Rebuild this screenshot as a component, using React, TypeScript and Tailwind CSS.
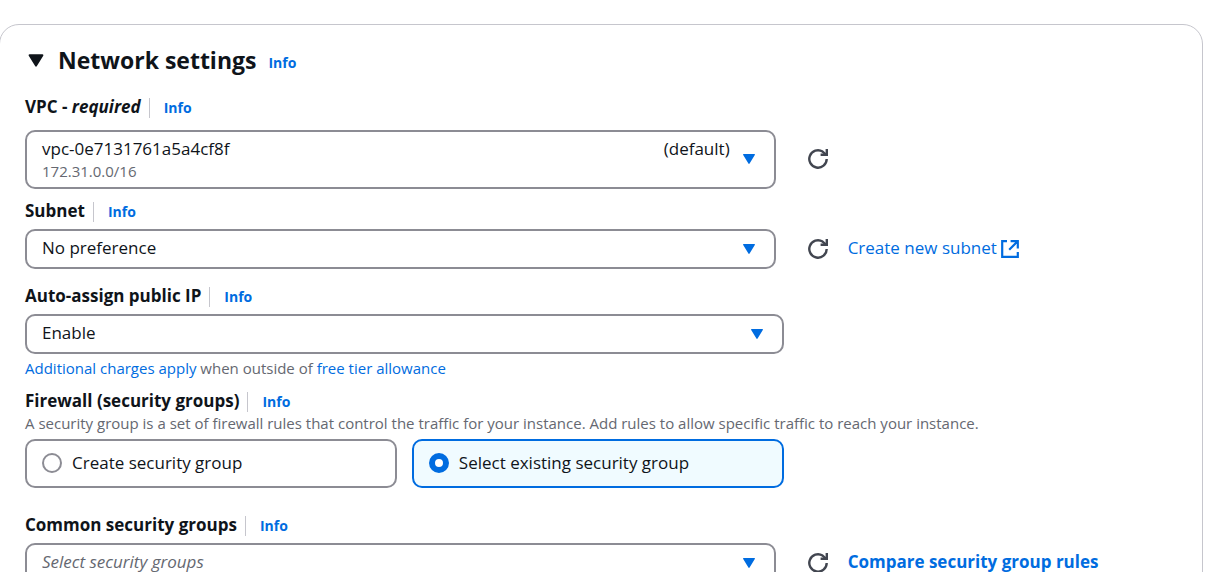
import type { ReactNode } from "react";

function InfoLink({ topic }: { topic: string }) {
  return (
    <a href="#info" aria-label={`Info about ${topic}`} className="text-[14px] font-bold leading-5 text-[#006ce0]">
      Info
    </a>
  );
}

function FieldLabel({ htmlFor, topic, children }: { htmlFor: string; topic: string; children: ReactNode }) {
  return (
    <div className="flex h-5 items-center">
      <label htmlFor={htmlFor} className="pb-0.5 pr-2 font-bold">
        {children}
      </label>
      <span className="flex h-5 items-center border-l border-[#c6c6cd] pl-3.5">
        <InfoLink topic={topic} />
      </span>
    </div>
  );
}

function Caret({ className }: { className: string }) {
  return (
    <svg viewBox="0 0 14 12" fill="currentColor" aria-hidden="true" className={className}>
      <path d="M1.8 1h10.4c.6 0 .9.6.6 1.1L7.6 10.6c-.3.5-.9.5-1.2 0L1.2 2.1C.9 1.6 1.2 1 1.8 1z" />
    </svg>
  );
}

function Dropdown({ id, options, placeholder }: { id: string; options: string[]; placeholder?: boolean }) {
  return (
    <div className="relative">
      <select
        id={id}
        className={`h-10 w-full appearance-none rounded-[10px] border-2 border-[#8c8c94] bg-white pb-0.5 pl-[15px] pr-10 ${
          placeholder ? "italic text-[#656871]" : ""
        }`}
      >
        {options.map((option) => (
          <option key={option}>{option}</option>
        ))}
      </select>
      <Caret className="pointer-events-none absolute right-5 top-3.5 h-3 w-3.5 text-[#006ce0]" />
    </div>
  );
}

function RefreshButton({ label }: { label: string }) {
  return (
    <button type="button" aria-label={label} className="px-2.5 text-[#424650]">
      <svg viewBox="0 0 20 20" fill="none" stroke="currentColor" strokeWidth="2.4" className="size-5">
        <path d="M18.7 10A8.7 8.7 0 1 1 14.6 2.6L18 5.6" />
        <path d="M18.8 0v5.8H12.6" />
      </svg>
    </button>
  );
}

function ExternalIcon() {
  return (
    <svg viewBox="0 0 18 18" fill="none" stroke="currentColor" strokeWidth="2.2" aria-hidden="true" className="size-[18px]">
      <path d="M6 1.2H1.2v15.6h15.6V12" />
      <path d="M9.6 1.2h7.2v7.2M16.6 1.4 8.2 9.8" />
    </svg>
  );
}

function Tile({ label, defaultChecked }: { label: string; defaultChecked?: boolean }) {
  return (
    <label className="flex h-[49px] items-center gap-2.5 rounded-[10px] border-2 border-[#8c8c94] px-[15px] pb-0.5 has-checked:border-[#006ce0] has-checked:bg-[#f0fbff]">
      <input
        type="radio"
        name="firewall"
        defaultChecked={defaultChecked}
        className="size-5 shrink-0 appearance-none rounded-full border-2 border-[#8c8c94] bg-white checked:border-[6px] checked:border-[#006ce0]"
      />
      {label}
    </label>
  );
}

const row = "grid grid-cols-[2fr_1fr] items-center gap-3.5";

export default function App() {
  return (
    <main className="h-screen overflow-hidden bg-white pt-6 font-['Open_Sans','Noto_Sans',sans-serif] text-[17px] leading-5 text-[#0f141a]">
      <section className="-ml-px mr-5 rounded-[20px] border border-[#c6c6cd] px-[25px] pb-8 pt-5">
        <header className="flex items-baseline gap-3">
          <button type="button" aria-expanded="true" className="flex items-center gap-[13px]">
            <Caret className="ml-0.5 h-[15px] w-[18px]" />
            <h2 className="text-[23px] font-bold leading-[30px]">Network settings</h2>
          </button>
          <InfoLink topic="network settings" />
        </header>

        <div className="mt-[23px]">
          <FieldLabel htmlFor="vpc" topic="VPC">
            VPC - <em>required</em>
          </FieldLabel>
          <div className={`${row} mt-3`}>
            <div className="pr-2">
              <button
                id="vpc"
                type="button"
                aria-haspopup="listbox"
                className="flex w-full items-center rounded-[10px] border-2 border-[#8c8c94] px-[15px] pb-1.5 pt-[7px] text-left"
              >
                <span className="flex-1">
                  <span className="flex justify-between">
                    <span>vpc-0e7131761a5a4cf8f</span>
                    <span>(default)</span>
                  </span>
                  <span className="block pt-0.5 text-[15px] text-[#656871]">172.31.0.0/16</span>
                </span>
                <Caret className="mb-0.5 ml-3 mr-[3px] h-3 w-3.5 text-[#006ce0]" />
              </button>
            </div>
            <div className="flex pb-0.5">
              <RefreshButton label="Refresh VPCs" />
            </div>
          </div>
        </div>

        <div className="mt-[13px]">
          <FieldLabel htmlFor="subnet" topic="subnet">
            Subnet
          </FieldLabel>
          <div className={`${row} mt-[7px]`}>
            <div className="pr-2">
              <Dropdown id="subnet" options={["No preference"]} />
            </div>
            <div className="flex items-center gap-2.5">
              <RefreshButton label="Refresh subnets" />
              <a href="#create-subnet" className="flex items-center gap-1 text-[#006ce0]">
                <span className="pb-0.5">Create new subnet</span>
                <ExternalIcon />
              </a>
            </div>
          </div>
        </div>

        <div className="mt-[18px]">
          <FieldLabel htmlFor="public-ip" topic="auto-assign public IP">
            Auto-assign public IP
          </FieldLabel>
          <div className={`${row} mt-[7px]`}>
            <Dropdown id="public-ip" options={["Enable", "Disable"]} />
          </div>
          <p className="mt-1 text-[15px] leading-5 text-[#656871]">
            <a href="#charges" className="text-[#006ce0]">Additional charges apply</a> when outside of{" "}
            <a href="#free-tier" className="text-[#006ce0]">free tier allowance</a>
          </p>
        </div>

        <div className="mt-3.5">
          <FieldLabel htmlFor="firewall" topic="firewall">
            Firewall (security groups)
          </FieldLabel>
          <p className="mt-px text-[15px] leading-5 text-[#656871]">
            A security group is a set of firewall rules that control the traffic for your instance. Add rules to allow
            specific traffic to reach your instance.
          </p>
          <div className={`${row} mt-1.5`}>
            <div id="firewall" role="radiogroup" className="grid grid-cols-2 gap-[15px]">
              <Tile label="Create security group" />
              <Tile label="Select existing security group" defaultChecked />
            </div>
          </div>
        </div>

        <div className="mt-7">
          <FieldLabel htmlFor="security-groups" topic="common security groups">
            Common security groups
          </FieldLabel>
          <div className={`${row} mt-[7px]`}>
            <div className="pr-2">
              <Dropdown id="security-groups" options={["Select security groups"]} placeholder />
            </div>
            <div className="flex items-center gap-2.5">
              <RefreshButton label="Refresh security groups" />
              <a href="#compare" className="pb-0.5 font-bold text-[#006ce0]">Compare security group rules</a>
            </div>
          </div>
        </div>
      </section>
    </main>
  );
}
